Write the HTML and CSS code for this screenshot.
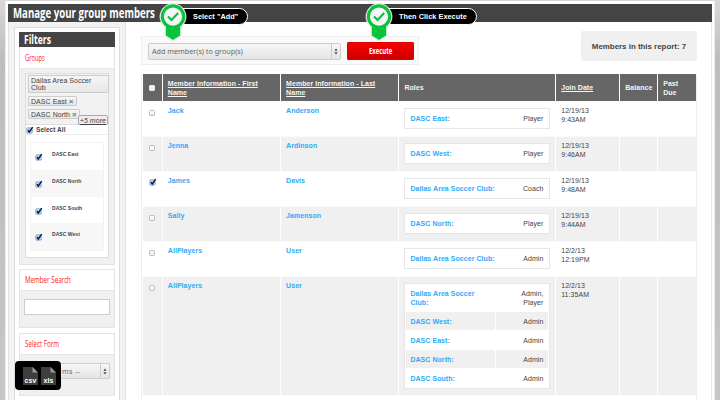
FILE: index.html
```html
<!DOCTYPE html>
<html lang="en">
<head>
<meta charset="utf-8">
<title>Manage your group members</title>
<link rel="stylesheet" href="styles.css">
</head>
<body>
<svg width="0" height="0" class="defs" aria-hidden="true">
  <symbol id="check" viewBox="0 0 8 8"><rect x=".7" y="1.7" width="5.6" height="5.6" rx="1" fill="#a9d2f3" stroke="#7fa6c9" stroke-width=".7"/><path d="M1.9 4.2 3.3 6 6.7 1.1" fill="none" stroke="#0b1d3b" stroke-width="1.4"/></symbol>
  <symbol id="arrows" viewBox="0 0 6 8"><path d="M1.2 3.2 3 .6 4.8 3.2zM1.2 4.8 3 7.4 4.8 4.8z" fill="#444"/></symbol>
  <symbol id="pin" viewBox="0 0 28 40"><path d="M14 .4a13.2 13.2 0 0 1 8 23.7V33l-8 5.2L6 33V24.1A13.2 13.2 0 0 1 14 .4z" fill="#fff" stroke="#ccc" stroke-width=".5"/><circle cx="14" cy="13.6" r="12.3" fill="#08c43c"/><path d="M6.8 23h14.4v9.4L14 37 6.8 32.4z" fill="#08c43c"/><circle cx="14" cy="13.6" r="9.1" fill="#f5f5f5"/><path d="M9 13.5l3.5 3.5 6.7-7" fill="none" stroke="#08c43c" stroke-width="2.2"/></symbol>
  <symbol id="file" viewBox="0 0 15 18"><path d="M0 0h9.5L15 5.5V18H0z" fill="#3e3e3e"/><path d="M9.5 0 15 5.5H9.5z" fill="#999"/></symbol>
</svg>
<div class="page">
  <header class="title"><h1>Manage your group members</h1></header>
  <div class="content">
    <aside class="sidebar">
      <div class="side-inner">
        <section class="box groups">
          <h2><span>Filters</span></h2>
          <h3><span class="w-groups">Groups</span></h3>
          <div class="group-body">
            <div class="tags">
              <div class="tag wide">Dallas Area Soccer<br>Club</div>
              <div class="tag">DASC East <b>×</b></div>
              <div class="tag">DASC North <b>×</b></div>
              <span class="more">+5 more</span>
            </div>
            <div class="all"><svg class="chk"><use href="#check"/></svg><span>Select All</span></div>
            <div class="list">
              <div><svg class="chk"><use href="#check"/></svg><span>DASC East</span></div>
              <div><svg class="chk"><use href="#check"/></svg><span>DASC North</span></div>
              <div><svg class="chk"><use href="#check"/></svg><span>DASC South</span></div>
              <div><svg class="chk"><use href="#check"/></svg><span>DASC West</span></div>
            </div>
          </div>
        </section>
        <section class="box search">
          <h3><span>Member Search</span></h3>
          <div class="pad"><div class="input"></div></div>
        </section>
        <section class="box form">
          <h3><span>Select Form</span></h3>
          <div class="pad"><div class="select small"><span>ms --</span><i><svg><use href="#arrows"/></svg></i></div></div>
        </section>
      </div>
    </aside>
    <main>
      <div class="top">
        <div class="toolbar">
          <div class="select"><span>Add member(s) to group(s)</span><i><svg><use href="#arrows"/></svg></i></div>
          <div class="button"><span>Execute</span></div>
        </div>
        <div class="count">Members in this report: 7</div>
      </div>
      <div class="table">
        <div class="row head"><div><i class="cb"></i></div><div><u>Member Information - First<br>Name</u></div><div><u>Member Information - Last<br>Name</u></div><div>Roles</div><div><u>Join Date</u></div><div>Balance</div><div>Past<br>Due</div></div>
        <div class="row"><div><i class="cb"></i></div><div class="name">Jack</div><div class="name">Anderson</div><div><div class="roles"><p><b>DASC East:</b><span>Player</span></p></div></div><div>12/19/13<br>9:43AM</div><div></div><div></div></div>
        <div class="row odd"><div><i class="cb"></i></div><div class="name">Jenna</div><div class="name">Ardinson</div><div><div class="roles"><p><b>DASC West:</b><span>Player</span></p></div></div><div>12/19/13<br>9:46AM</div><div></div><div></div></div>
        <div class="row on"><div><svg class="chk"><use href="#check"/></svg></div><div class="name">James</div><div class="name">Davis</div><div><div class="roles"><p><b>Dallas Area Soccer Club:</b><span>Coach</span></p></div></div><div>12/19/13<br>9:48AM</div><div></div><div></div></div>
        <div class="row odd"><div><i class="cb"></i></div><div class="name">Sally</div><div class="name">Jamenson</div><div><div class="roles"><p><b>DASC North:</b><span>Player</span></p></div></div><div>12/19/13<br>9:44AM</div><div></div><div></div></div>
        <div class="row"><div><i class="cb"></i></div><div class="name">AllPlayers</div><div class="name">User</div><div><div class="roles"><p><b>Dallas Area Soccer Club:</b><span>Admin</span></p></div></div><div>12/2/13<br>12:19PM</div><div></div><div></div></div>
        <div class="row odd tall"><div><i class="cb"></i></div><div class="name">AllPlayers</div><div class="name">User</div><div><div class="roles multi">
          <p><b>Dallas Area Soccer<br>Club:</b><span>Admin,<br>Player</span></p>
          <p><b>DASC West:</b><span>Admin</span></p>
          <p><b>DASC East:</b><span>Admin</span></p>
          <p><b>DASC North:</b><span>Admin</span></p>
          <p><b>DASC South:</b><span>Admin</span></p>
        </div></div><div>12/2/13<br>11:35AM</div><div></div><div></div></div>
        <div class="row last"><div></div><div></div><div></div><div></div><div></div><div></div><div></div></div>
      </div>
    </main>
  </div>
</div>
<div class="callout one"><svg><use href="#pin"/></svg><span>Select "Add"</span></div>
<div class="callout two"><svg><use href="#pin"/></svg><span>Then Click Execute</span></div>
<div class="export"><div><svg><use href="#file"/></svg><span>csv</span></div><div><svg><use href="#file"/></svg><span>xls</span></div></div>
</body>
</html>
```
FILE: styles.css
```css
* { box-sizing: border-box; margin: 0; padding: 0; }
html, body { width: 720px; height: 400px; overflow: hidden; }
body { position: relative; background: linear-gradient(#d8d8d8, #bdbdbd 60px, #c6c6c6); font: 7px/9px "Liberation Sans", Arial, sans-serif; letter-spacing: .05px; color: #444; padding: 1px 5px 0; }
.defs { position: absolute; }
.page { background: #fff; height: 399px; padding: 3px 2px 0; border: solid #efefef; border-width: 0 1px; }
.title { height: 18px; background: #444; padding-left: 5px; }
h1, h2, h3, .button { font-family: "Open Sans", "Noto Sans", sans-serif; white-space: nowrap; letter-spacing: 0; }
h1 { font-size: 13.6px; line-height: 18px; color: #fff; transform: scaleX(.71); transform-origin: left; }
.content { display: flex; height: 378px; border-right: 1px solid #e8e8e8; }
.sidebar { width: 118px; flex: none; background: #f2f2f2; border: solid #e2e2e2; border-width: 0 1px; padding: 5px 5px 0 5px; }
.side-inner { height: 373px; background: #fff; border: 1px solid #ddd; border-bottom: 0; padding: 4px; }
.box { background: #f0f0f0; border: 1px solid #e4e4e4; }
.box h2 { height: 15px; margin: 0 -1px; background: #444; color: #fff; font-size: 11.5px; line-height: 15px; padding-left: 5px; }
.box h2 span, h3 span, .button span { display: inline-block; transform: scaleX(.75); transform-origin: left; }
.box h3 { height: 21px; background: #fff; border-bottom: 1px solid #e8e8e8; font-size: 9px; line-height: 20px; font-weight: 400; color: #f22; padding-left: 5px; }
.box h3 span { transform: scaleX(.69); }
.box h3 .w-groups { transform: scaleX(.64); }
.groups { height: 233px; border-top: 0; }
.groups h3 { height: 22px; line-height: 21px; }
.group-body { margin: 4px 5px 0; height: 185px; border: 1px solid #ddd; background: #fff; }
.tags { position: relative; height: 51px; padding: 1px 0 0 2px; background: #f2f2f2; display: flex; flex-direction: column; align-items: flex-start; gap: 2.5px; border-bottom: 1px solid #ddd; }
.tag { height: 10.5px; border: 1px solid #ccc; border-radius: 1px; background: linear-gradient(#f6f6f6, #e6e6e6); padding: 0 2px; line-height: 9px; white-space: nowrap; }
.tag b { color: #777; font-size: 8px; line-height: 8px; }
.tag.wide { width: 81px; height: 18px; line-height: 6.8px; padding-top: 2px; }
.more { position: absolute; right: 0; bottom: -1px; height: 10px; padding: 0 1px; border: 1px solid #aaa; border-radius: 2px; background: #eee; font-style: italic; text-decoration: underline; line-height: 9px; }
.all { display: flex; height: 10px; align-items: center; gap: 2px; padding-left: 0; font-weight: 700; font-size: 6.5px; border-bottom: 1px solid #eee; }
.chk { width: 8px; height: 8px; flex: none; }
.list { margin: 7px 4px 0; border: 1px solid #f3f3f3; }
.list div { height: 26.8px; display: flex; padding: 10px 0 0 4px; gap: 9px; font: 700 5px/6px "Liberation Sans", Arial, sans-serif; }
.list span { margin-top: -2px; }
.list div:nth-child(even) { background: #f7f7f7; }
.search { margin-top: 4px; height: 59px; }
.form { margin-top: 5px; height: 63px; }
.pad { padding: 8px 4px; }
.input { height: 16px; background: #fff; border: 1px solid #ccc; }
.select { display: flex; height: 17px; width: 193px; border: 1px solid #ccc; border-radius: 2px; background: linear-gradient(#f7f7f7, #e4e4e4); font: 7.2px/15px "Noto Sans", sans-serif; letter-spacing: 0; color: #666; justify-content: space-between; padding-left: 3px; }
.select i { width: 9px; border-left: 1px solid #ccc; display: flex; align-items: center; justify-content: center; }
.select svg { width: 6px; height: 7px; }
.select.small { width: auto; padding-left: 37px; height: 16px; line-height: 14px; letter-spacing: .3px; }
main { width: 585px; flex: none; padding: 9px 14px 0 15px; }
.top { display: flex; justify-content: space-between; height: 43px; }
.toolbar { display: flex; gap: 6px; margin-top: 5px; width: 278px; height: 29px; padding: 6px 5px 6px 6px; border: 1px solid #eee; background: #fafafa; }
.select, .button { flex: none; }
.button { width: 67px; height: 18px; margin-top: -1px; border-radius: 1px; background: linear-gradient(#f70000, #cc0000); border: 1px solid #d00; text-align: center; color: #fff; font-size: 9px; line-height: 16px; font-weight: 700; }
.button span { transform: scaleX(.66); transform-origin: center; }
.count { width: 116px; height: 30px; border-radius: 2px; background: #f0f0f0; font-size: 7.9px; font-weight: 700; line-height: 31px; text-align: center; white-space: nowrap; letter-spacing: 0; }
.table { width: 556px; height: 326px; border: solid #eee; border-width: 0 1px; padding-left: 1px; }
.row { display: grid; grid-template-columns: 18.5px 117px 117px 155.5px 62.7px 36.7px 38px; column-gap: 1.3px; height: 35px; border-bottom: 1px solid #fafafa; }
.row > div { padding: 4px 0 0 5px; white-space: nowrap; }
.row > div:first-child { padding: 8px 0 0 6px; }
.row.on > div:first-child { padding-top: 6px; }
.odd > div { background: #f0f0f0; }
.head { height: 28px; font-weight: 700; color: #f5f5f5; }
.head > div { background: #666; display: flex; align-items: center; padding-top: 0; }
.row.head > div:first-child { padding: 0 0 0 6px; }
.cb { display: block; width: 6px; height: 6px; border: 1px solid #bbb; border-radius: 1.5px; background: linear-gradient(#fff, #eee); }
.head .cb { border-color: #e8e8e8; border-radius: 1px; }
.name, .roles b { color: #2eaafa; font-weight: 700; }
.roles { width: 146px; margin-top: 2px; border: 1px solid #e6e6e6; background: #fff; }
.roles p { display: flex; justify-content: space-between; padding: 5px 6px 5px 5px; }
.roles span { text-align: right; }
.tall { height: 119px; }
.multi { padding: 0 1px; }
.multi p { display: grid; grid-template-columns: 89px 1fr; column-gap: 1px; padding: 0; height: 19px; }
.multi p:first-child { height: 28px; }
.multi p > * { margin-bottom: 1px; padding: 5px 5px 4px 4px; }
.multi p:nth-child(even) > * { background: #f0f0f0; }
.last { height: 5px; border: 0; }
.callout { position: absolute; top: 3px; display: flex; align-items: flex-start; }
.callout svg { width: 28px; height: 40px; position: relative; z-index: 1; }
.callout span { margin: 4.5px 0 0 -8px; height: 17px; border-radius: 0 9px 9px 0; border: 1px solid #fff; background: #000; color: #fff; font-weight: 700; font-size: 7.3px; line-height: 15px; padding-left: 13px; white-space: nowrap; }
.one { left: 159px; } .one span { width: 69px; }
.two { left: 365px; } .two span { width: 92px; }
.export { position: absolute; left: 15px; top: 361px; width: 46px; height: 29px; border-radius: 4px; background: #000; display: flex; gap: 3px; padding: 6px 0 0 8px; }
.export div { position: relative; width: 15px; height: 18px; }
.export svg { display: block; width: 15px; height: 18px; }
.export span { position: absolute; left: 0; right: 0; bottom: 0; text-align: center; font-weight: 700; font-size: 7px; line-height: 8px; color: #fff; }
```
